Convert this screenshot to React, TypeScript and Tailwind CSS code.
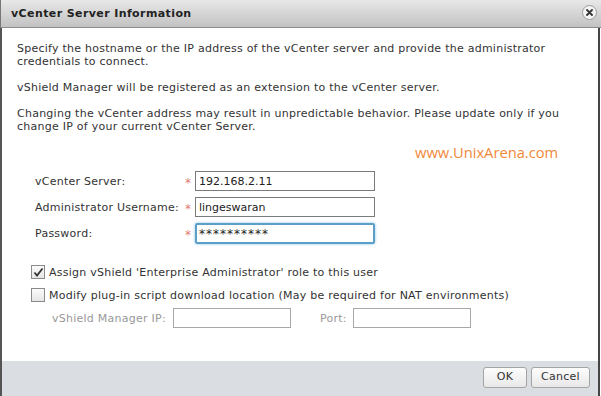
import React from 'react';

const body = "font-['DejaVu_Sans',sans-serif] text-[11px] tracking-[0.25px] text-[#333]";

const Field: React.FC<{ label: string; value: string; focused?: boolean }> = ({ label, value, focused }) => (
  <div className="flex items-center h-[20px]">
    <span className="w-[150px] text-[#333]">{label}</span>
    <span className="w-[10px] text-[#e07a74] text-[12px] leading-none pt-[3px]">*</span>
    <div
      className={
        focused
          ? 'w-[180px] h-[21px] border-2 border-[#5b9fc9] shadow-[0_0_3px_#8cc4e4] flex items-center px-[2px] rounded-[2px]'
          : 'w-[180px] h-[20px] border border-[#7a7a7a] flex items-center px-[3px]'
      }
    >
      <span className={focused ? 'text-[12px] tracking-[1px] text-[#222] pt-[2px]' : 'text-[11px] tracking-normal text-[#222]'}>
        {value}
      </span>
    </div>
  </div>
);

export default function App() {
  return (
    <div className={`w-[601px] h-[396px] bg-white flex flex-col overflow-hidden ${body}`}>
      {/* Title bar */}
      <div className="h-[28px] shrink-0 flex items-center justify-between pl-[10px] pr-[4px] bg-gradient-to-b from-[#e8e8e8] to-[#c2c2c2] border-b border-[#8c8c8c] border-l border-l-[#777]">
        <span className="font-bold text-[11px] text-[#222] tracking-[0.4px] pt-[1px]">vCenter Server Information</span>
        <div className="w-[15px] h-[15px] rounded-full bg-[#f4f4f4] border border-[#9a9a9a] flex items-center justify-center mb-[2px]">
          <svg width="7" height="7" viewBox="0 0 7 7">
            <path d="M1 1L6 6M6 1L1 6" stroke="#333" strokeWidth="1.8" strokeLinecap="round" />
          </svg>
        </div>
      </div>

      {/* Body */}
      <div className="flex-1 flex flex-col border-l-2 border-l-[#555] border-r-2 border-r-[#444] mr-[1px]">
        <div className="flex-1 pl-[15px] pt-[14px] leading-[13px]">
          <p className="w-[560px]">
            Specify the hostname or the IP address of the vCenter server and provide the administrator credentials to connect.
          </p>
          <p className="mt-[13px]">vShield Manager will be registered as an extension to the vCenter server.</p>
          <p className="mt-[13px] w-[560px]">
            Changing the vCenter address may result in unpredictable behavior. Please update only if you change IP of your current vCenter Server.
          </p>

          <div className="mt-[9px] pl-[398px] h-[20px] leading-[20px] font-['Open_Sans',sans-serif] text-[14.7px] tracking-normal text-[#f0883a]">
            www.UnixArena.com
          </div>

          <div className="mt-[9px] pl-[18px] flex flex-col gap-[6px]">
            <Field label="vCenter Server:" value="192.168.2.11" />
            <Field label="Administrator Username:" value="lingeswaran" />
            <Field label="Password:" value="**********" focused />
          </div>

          <div className="mt-[19px] pl-[14px] flex flex-col">
            <label className="flex items-center h-[20px] gap-[4px]">
              <span className="w-[14px] h-[14px] border border-[#8a8a8a] bg-gradient-to-b from-[#fafafa] to-[#e6e6e6] flex items-center justify-center">
                <svg width="11" height="10" viewBox="0 0 11 10">
                  <path d="M1.5 5.5L4 8.5L9.5 1.5" stroke="#333" strokeWidth="1.8" fill="none" />
                </svg>
              </span>
              <span>Assign vShield 'Enterprise Administrator' role to this user</span>
            </label>
            <label className="flex items-center h-[20px] gap-[4px] mt-[3px]">
              <span className="w-[14px] h-[14px] border border-[#8a8a8a] bg-gradient-to-b from-[#fafafa] to-[#e6e6e6]" />
              <span>Modify plug-in script download location (May be required for NAT environments)</span>
            </label>
            <div className="flex items-center h-[20px] mt-[3px] pl-[21px] text-[#999]">
              <span className="w-[121px]">vShield Manager IP:</span>
              <div className="w-[118px] h-[20px] border border-[#a8a8a8]" />
              <span className="ml-[29px] w-[33px]">Port:</span>
              <div className="w-[118px] h-[20px] border border-[#a8a8a8]" />
            </div>
          </div>
        </div>

        {/* Footer */}
        <div className="h-[35px] shrink-0 bg-[#dadde1] flex items-start justify-end gap-[4px] pt-[6px] pr-[8px]">
          <button className="w-[44px] h-[21px] rounded-[3px] border border-[#a4a4a4] bg-gradient-to-b from-[#fdfdfd] to-[#e8e8e8] text-[#333]">
            OK
          </button>
          <button className="w-[59px] h-[21px] rounded-[3px] border border-[#a4a4a4] bg-gradient-to-b from-[#fdfdfd] to-[#e8e8e8] text-[#333]">
            Cancel
          </button>
        </div>
      </div>
    </div>
  );
}
